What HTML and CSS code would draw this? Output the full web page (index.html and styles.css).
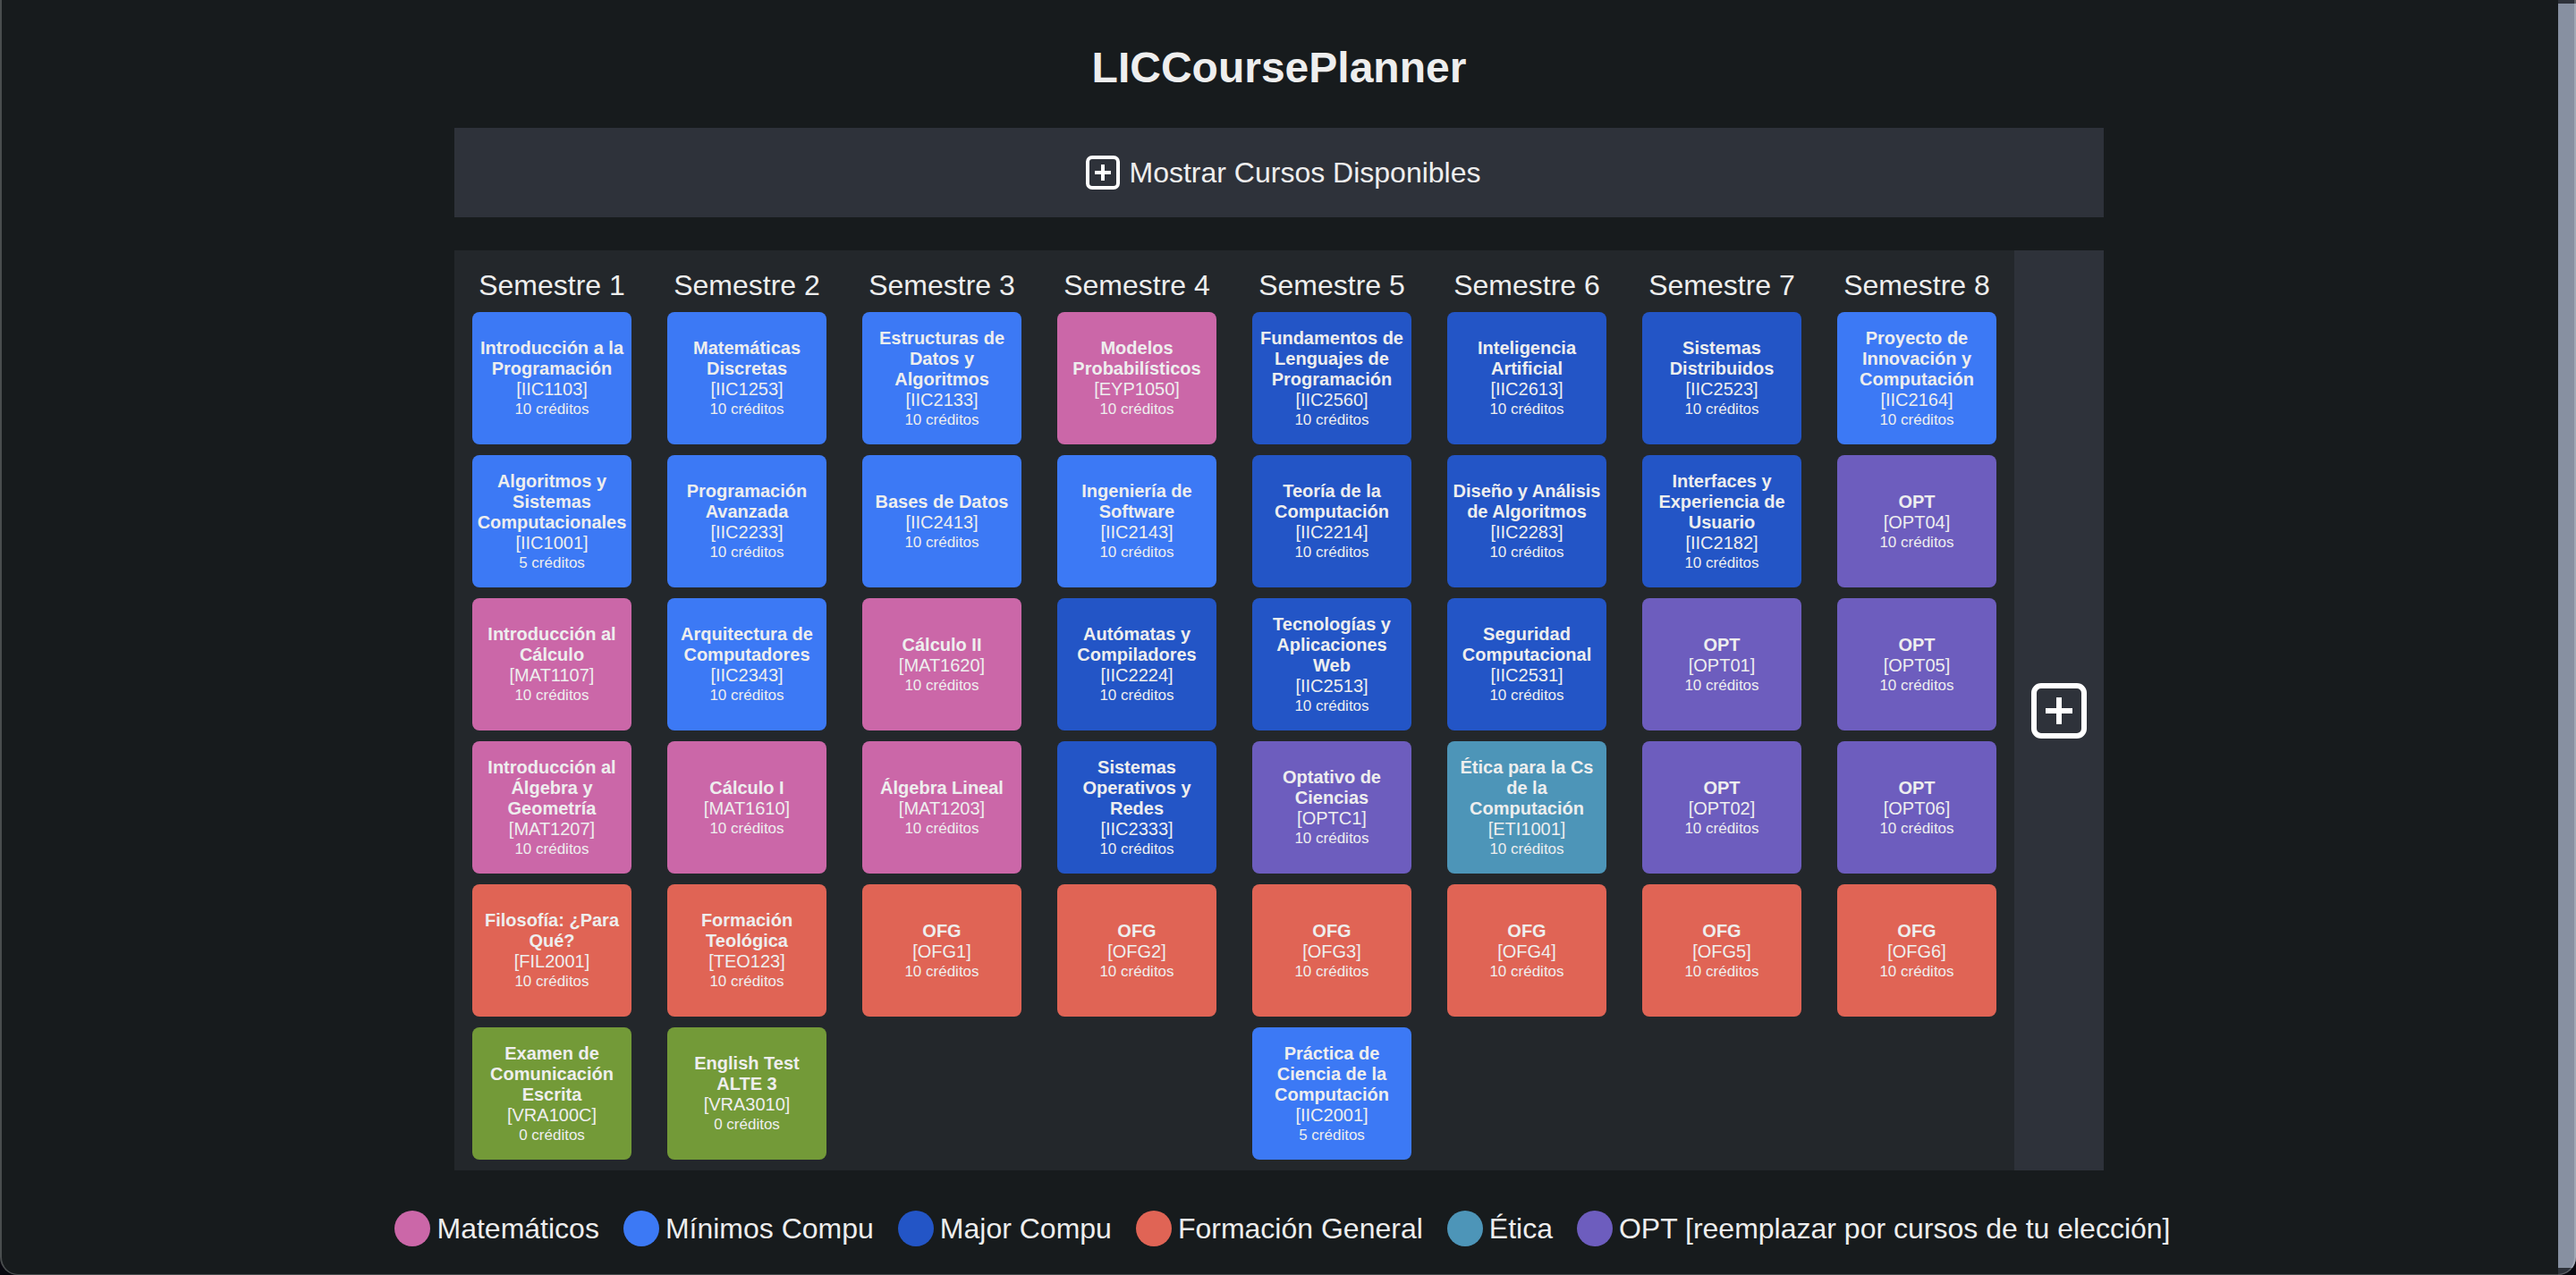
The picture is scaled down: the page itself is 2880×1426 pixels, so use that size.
FILE: index.html
```html
<!DOCTYPE html>
<html lang="es">
<head>
<meta charset="utf-8">
<title>LICCoursePlanner</title>
<link rel="stylesheet" href="styles.css">
</head>
<body>
<main class="page">
  <h1 class="title">LICCoursePlanner</h1>
  <button class="toggle" type="button">
    <svg class="toggle-icon" viewBox="0 0 38 38" aria-hidden="true"><rect x="2" y="2" width="34" height="34" rx="5"/><path d="M19 10v18M10 19h18"/></svg>
    <span>Mostrar Cursos Disponibles</span>
  </button>
  <div class="board">
    <div class="semesters" id="semesters"></div>
    <button class="add" type="button" aria-label="Agregar semestre">
      <svg class="add-icon" viewBox="0 0 62 62" aria-hidden="true"><rect x="3" y="3" width="56" height="56" rx="8"/><path d="M31 16v30M16 31h30"/></svg>
    </button>
  </div>
  <ul class="legend">
    <li><i class="dot math"></i>Matemáticos</li>
    <li><i class="dot minimum"></i>Mínimos Compu</li>
    <li><i class="dot major"></i>Major Compu</li>
    <li><i class="dot general"></i>Formación General</li>
    <li><i class="dot ethics"></i>Ética</li>
    <li><i class="dot optional"></i>OPT [reemplazar por cursos de tu elección]</li>
  </ul>
</main>
<div class="scrollbar" aria-hidden="true"><div class="thumb"></div></div>
<div class="frame" aria-hidden="true"></div>
<script src="planner.js"></script>
</body>
</html>
```
FILE: styles.css
```css
* {
  box-sizing: border-box;
}

html {
  background: #08080f;
}

body {
  margin: 0;
  min-height: 100vh;
  padding-right: 20px;
  overflow: hidden;
  border-radius: 0 0 20px 20px;
  background: #171b1d;
  color: #eee;
  font-family: "Liberation Sans", Arial, sans-serif;
  font-size: 32px;
  line-height: 38px;
}

button {
  border: 0;
  background: #2e323a;
  color: inherit;
  font: inherit;
  cursor: pointer;
}

svg {
  fill: none;
  stroke: #fff;
}

.page {
  display: flex;
  flex-direction: column;
  align-items: center;
}

.title {
  margin: 48px 0 40px;
  font-size: 48px;
  line-height: 55px;
}

.toggle,
.board {
  width: calc(100% - 40px);
  max-width: 1844px;
}

.toggle {
  display: flex;
  align-items: center;
  justify-content: center;
  gap: 10px;
  height: 100px;
  padding: 0 0 0 10px;
}

.toggle-icon {
  width: 38px;
  height: 38px;
  stroke-width: 4;
}

.board {
  display: flex;
  margin-top: 37px;
  background: #23272b;
}

.semesters {
  display: flex;
  flex: 1;
}

.semester {
  flex: 1;
  padding: 20px 20px 12px;
}

.semester h2 {
  margin: 0 0 11px;
  font-size: 32px;
  font-weight: 400;
  line-height: 38px;
  text-align: center;
  white-space: nowrap;
}

.courses {
  display: flex;
  flex-direction: column;
  gap: 12px;
}

.course {
  display: flex;
  flex-direction: column;
  justify-content: center;
  height: 148px;
  padding: 0 5px;
  border-radius: 8px;
  font-size: 20px;
  line-height: 23px;
  text-align: center;
}

.name {
  font-weight: 700;
}

.credits {
  font-size: 17px;
  line-height: 21px;
}

.add {
  display: flex;
  align-items: center;
  justify-content: center;
  width: 100px;
  padding: 0;
}

.add-icon {
  width: 62px;
  height: 62px;
  stroke-width: 6;
}

.legend {
  display: flex;
  justify-content: center;
  gap: 27px;
  margin: 45px 0 32px;
  padding: 0 0 0 8px;
  list-style: none;
}

.legend li {
  display: flex;
  align-items: center;
  gap: 7px;
  line-height: 40px;
}

.dot {
  width: 40px;
  height: 40px;
  border-radius: 50%;
}

.math { background: #cb67a8; }
.minimum { background: #3c79f5; }
.major { background: #2355c6; }
.general { background: #e06455; }
.ethics { background: #4d95b8; }
.optional { background: #6d5dbe; }
.exam { background: #739a38; }

.scrollbar {
  position: fixed;
  inset: 0 0 0 auto;
  width: 20px;
  padding: 4px 0 8px;
  border-radius: 0 0 20px 0;
  background: #2e323a;
  overflow: hidden;
}

.thumb {
  height: 100%;
  background: #8790a1;
}

.frame {
  position: fixed;
  inset: 0;
  border: solid #ffffff38;
  border-width: 0 2px 1px;
  border-radius: 0 0 20px 20px;
  pointer-events: none;
}
```
FILE: planner.js
```js
const semesters = [
  [
    ["Introducción a la Programación", "IIC1103", 10, "minimum"],
    ["Algoritmos y Sistemas Computacionales", "IIC1001", 5, "minimum"],
    ["Introducción al Cálculo", "MAT1107", 10, "math"],
    ["Introducción al Álgebra y Geometría", "MAT1207", 10, "math"],
    ["Filosofía: ¿Para Qué?", "FIL2001", 10, "general"],
    ["Examen de Comunicación Escrita", "VRA100C", 0, "exam"],
  ],
  [
    ["Matemáticas Discretas", "IIC1253", 10, "minimum"],
    ["Programación Avanzada", "IIC2233", 10, "minimum"],
    ["Arquitectura de Computadores", "IIC2343", 10, "minimum"],
    ["Cálculo I", "MAT1610", 10, "math"],
    ["Formación Teológica", "TEO123", 10, "general"],
    ["English Test ALTE 3", "VRA3010", 0, "exam"],
  ],
  [
    ["Estructuras de Datos y Algoritmos", "IIC2133", 10, "minimum"],
    ["Bases de Datos", "IIC2413", 10, "minimum"],
    ["Cálculo II", "MAT1620", 10, "math"],
    ["Álgebra Lineal", "MAT1203", 10, "math"],
    ["OFG", "OFG1", 10, "general"],
  ],
  [
    ["Modelos Probabilísticos", "EYP1050", 10, "math"],
    ["Ingeniería de Software", "IIC2143", 10, "minimum"],
    ["Autómatas y Compiladores", "IIC2224", 10, "major"],
    ["Sistemas Operativos y Redes", "IIC2333", 10, "major"],
    ["OFG", "OFG2", 10, "general"],
  ],
  [
    ["Fundamentos de Lenguajes de Programación", "IIC2560", 10, "major"],
    ["Teoría de la Computación", "IIC2214", 10, "major"],
    ["Tecnologías y Aplicaciones Web", "IIC2513", 10, "major"],
    ["Optativo de Ciencias", "OPTC1", 10, "optional"],
    ["OFG", "OFG3", 10, "general"],
    ["Práctica de Ciencia de la Computación", "IIC2001", 5, "minimum"],
  ],
  [
    ["Inteligencia Artificial", "IIC2613", 10, "major"],
    ["Diseño y Análisis de Algoritmos", "IIC2283", 10, "major"],
    ["Seguridad Computacional", "IIC2531", 10, "major"],
    ["Ética para la Cs de la Computación", "ETI1001", 10, "ethics"],
    ["OFG", "OFG4", 10, "general"],
  ],
  [
    ["Sistemas Distribuidos", "IIC2523", 10, "major"],
    ["Interfaces y Experiencia de Usuario", "IIC2182", 10, "major"],
    ["OPT", "OPT01", 10, "optional"],
    ["OPT", "OPT02", 10, "optional"],
    ["OFG", "OFG5", 10, "general"],
  ],
  [
    ["Proyecto de Innovación y Computación", "IIC2164", 10, "minimum"],
    ["OPT", "OPT04", 10, "optional"],
    ["OPT", "OPT05", 10, "optional"],
    ["OPT", "OPT06", 10, "optional"],
    ["OFG", "OFG6", 10, "general"],
  ],
];

const courseCard = ([name, code, credits, kind]) => `
  <article class="course ${kind}" draggable="true">
    <span class="name">${name}</span>
    <span>[${code}]</span>
    <span class="credits">${credits} créditos</span>
  </article>`;

document.getElementById("semesters").innerHTML = semesters
  .map((courses, i) => `
    <section class="semester">
      <h2>Semestre ${i + 1}</h2>
      <div class="courses">${courses.map(courseCard).join("")}</div>
    </section>`)
  .join("");
```
